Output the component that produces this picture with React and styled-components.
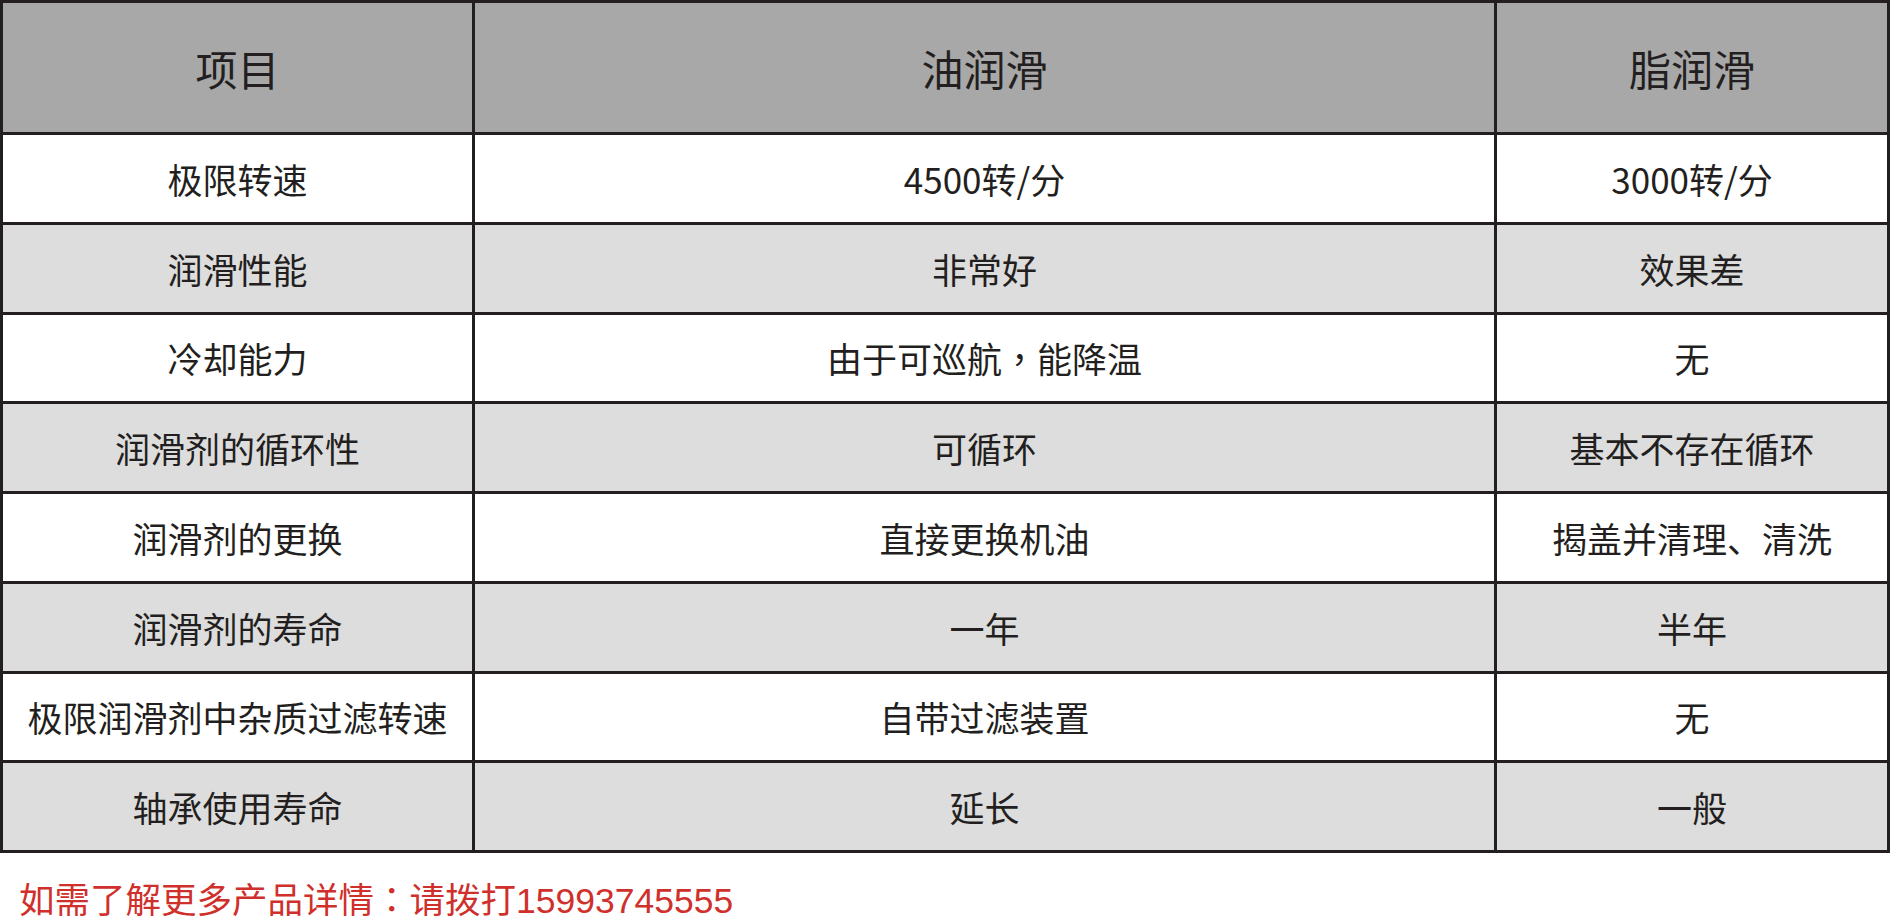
import React from "react";
import styled, { createGlobalStyle } from "styled-components";

const GlobalStyle = createGlobalStyle`
  html, body {
    margin: 0;
    padding: 0;
    background: #ffffff;
  }
  * {
    box-sizing: border-box;
  }
`;

// full-width punctuation in the picture sits centred in its box
const Punct = styled.span`
  font-family: "Noto Sans CJK TC", "Noto Sans CJK SC", sans-serif;
`;

const rows = [
  ["极限转速", "4500转/分", "3000转/分"],
  ["润滑性能", "非常好", "效果差"],
  ["冷却能力", <>由于可巡航<Punct>，</Punct>能降温</>, "无"],
  ["润滑剂的循环性", "可循环", "基本不存在循环"],
  ["润滑剂的更换", "直接更换机油", "揭盖并清理、清洗"],
  ["润滑剂的寿命", "一年", "半年"],
  ["极限润滑剂中杂质过滤转速", "自带过滤装置", "无"],
  ["轴承使用寿命", "延长", "一般"],
];

const App = () => {
  return (
    <>
      <GlobalStyle />
      <Page>
        <Table>
          <HeadCell>项目</HeadCell>
          <HeadCell>油润滑</HeadCell>
          <HeadCell>脂润滑</HeadCell>
          {rows.map((row, index) =>
            row.map((text, col) => (
              <Cell key={`${index}-${col}`} $shaded={index % 2 === 1}>
                {text}
              </Cell>
            ))
          )}
        </Table>
        <Contact>
          如需了解更多产品详情<Punct>：</Punct>请拨打15993745555
        </Contact>
      </Page>
    </>
  );
};

const Page = styled.div`
  width: 1891px;
  display: flex;
  flex-direction: column;
`;

const Table = styled.div`
  display: grid;
  grid-template-columns: 472px 1022px 393px;
  grid-template-rows: 132px repeat(8, 89.75px);
  width: 1890px;
  border-left: 3px solid #231f20;
  border-top: 3px solid #231f20;
  font-family: "Noto Sans CJK SC", "Noto Sans", sans-serif;
  color: #231f20;
`;

const HeadCell = styled.div`
  display: flex;
  align-items: center;
  justify-content: center;
  background: #a8a8a8;
  border-right: 3px solid #231f20;
  border-bottom: 3px solid #231f20;
  font-size: 42px;
  line-height: 1;
`;

const Cell = styled.div`
  display: flex;
  align-items: center;
  justify-content: center;
  background: ${(p) => (p.$shaded ? "#dddddd" : "#ffffff")};
  border-right: 3px solid #231f20;
  border-bottom: 3px solid #231f20;
  font-size: 35px;
  line-height: 1;
  white-space: nowrap;
`;

const Contact = styled.div`
  margin-top: 27px;
  padding-left: 19px;
  font-family: "Liberation Sans", "Noto Sans CJK SC", sans-serif;
  font-size: 35.5px;
  line-height: 36px;
  color: #d0302c;
`;

export default App;
